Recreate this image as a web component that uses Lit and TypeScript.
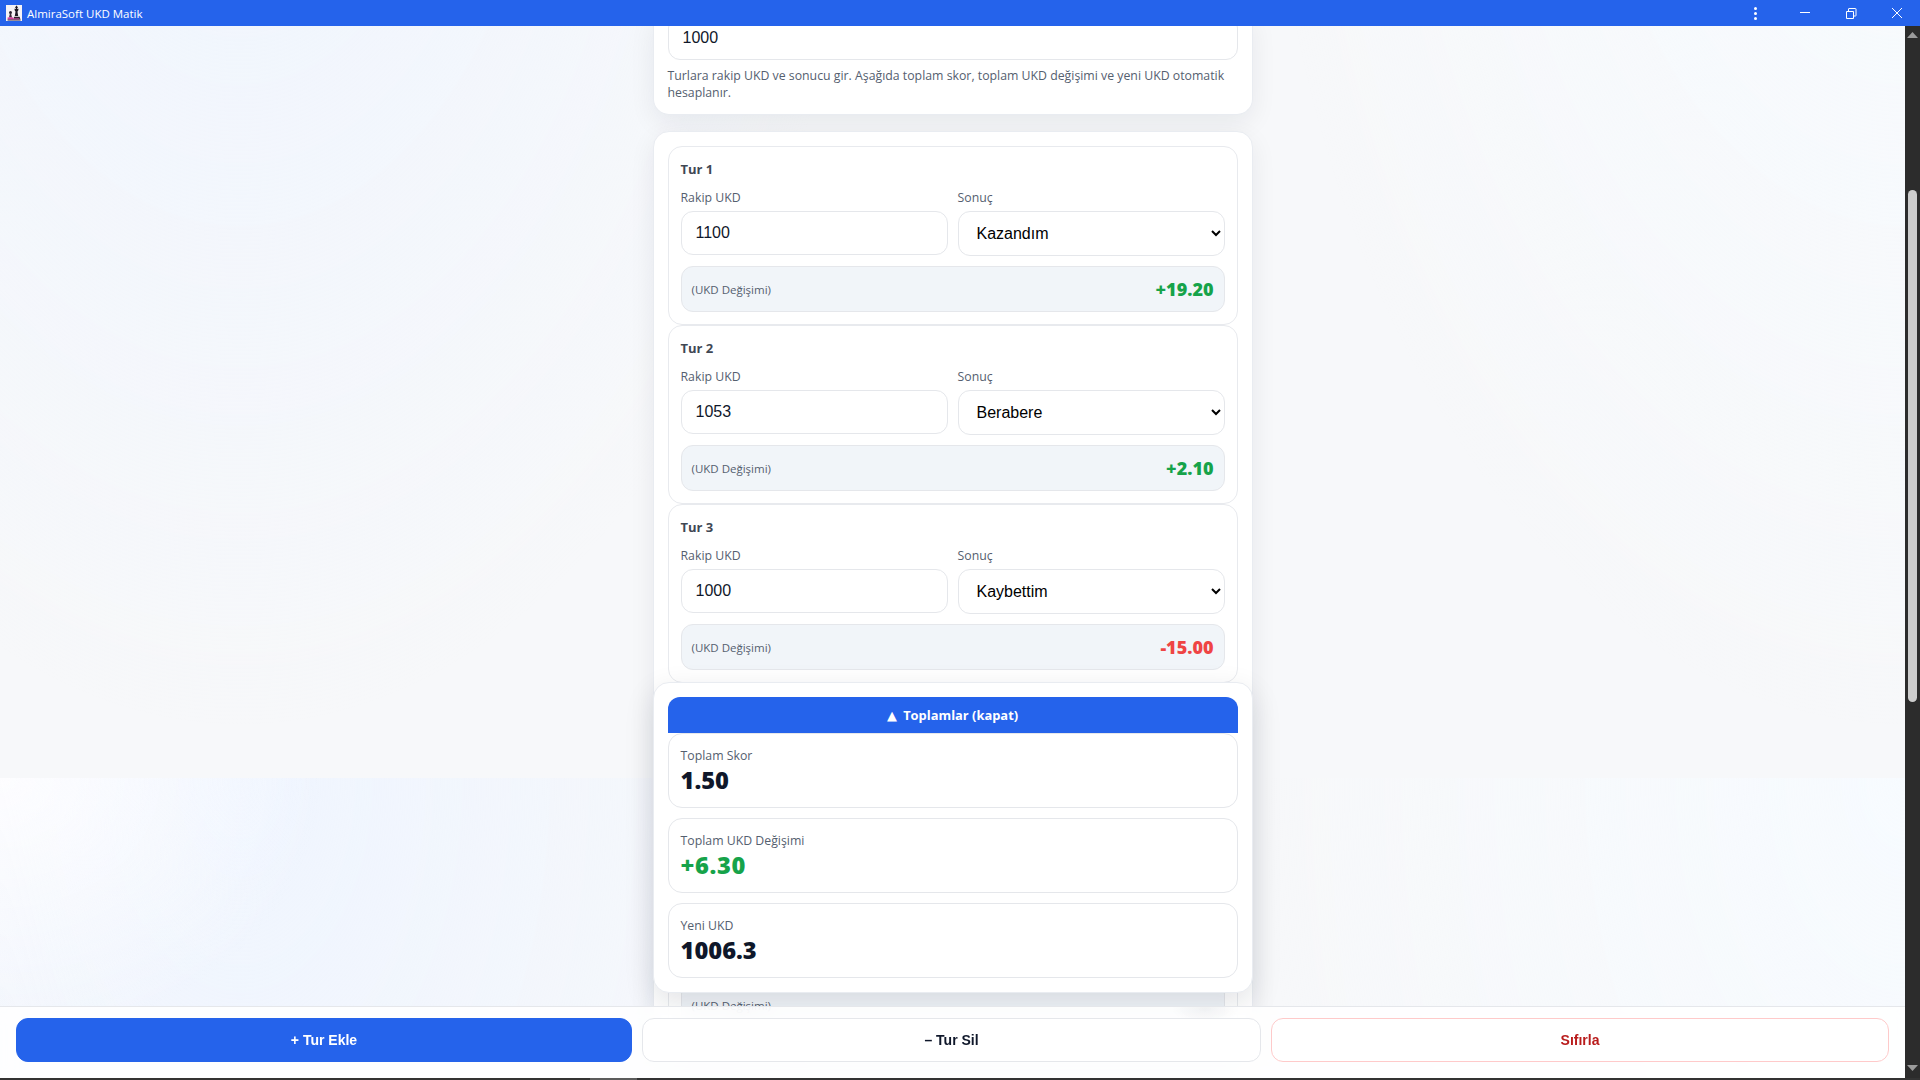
import { LitElement, html, css, svg } from 'lit';
import { customElement, state } from 'lit/decorators.js';

interface Round {
  rival: string;
  result: string;
  change: string;
  tone: 'up' | 'down' | 'flat';
}

const RESULTS = ['Kazandım', 'Berabere', 'Kaybettim'];

@customElement('app-root')
export class AppRoot extends LitElement {
  @state()
  rounds: Round[] = [
    { rival: '1100', result: 'Kazandım', change: '+19.20', tone: 'up' },
    { rival: '1053', result: 'Berabere', change: '+2.10', tone: 'up' },
    { rival: '1000', result: 'Kaybettim', change: '-15.00', tone: 'down' },
    { rival: '', result: 'Kazandım', change: '', tone: 'flat' },
    { rival: '', result: 'Kazandım', change: '', tone: 'flat' },
  ];

  static styles = css`
    :host {
      display: flex;
      flex-direction: column;
      width: 1920px;
      height: 1080px;
      overflow: hidden;
      background: #2b2b2b;
      font-family: 'Open Sans', 'Noto Sans', sans-serif;
      color: #0f172a;
    }

    .titlebar {
      flex: 0 0 26px;
      display: flex;
      align-items: center;
      background: #2563eb;
      color: #fff;
      font-size: 11.5px;
      padding-left: 6px;
    }
    .titlebar .logo {
      margin-right: 5px;
    }
    .titlebar .name {
      flex: 1;
    }
    .controls {
      display: block;
    }

    .window {
      flex: 0 0 1052px;
      display: flex;
      min-height: 0;
    }

    .content {
      position: relative;
      flex: 1;
      overflow: hidden;
      display: flex;
      justify-content: center;
      align-items: flex-start;
      background-color: #f7f8fa;
      background-image:
        radial-gradient(ellipse 320px 260px at 0 0, #fdfdff, rgba(253, 253, 255, 0)),
        radial-gradient(ellipse 620px 1000px at 240px 0, #eff5ff, rgba(239, 245, 255, 0)),
        radial-gradient(ellipse 640px 1000px at 100% 0, #f7fbff, rgba(247, 251, 255, 0));
      background-size: 100% 1052px;
      background-position: 0 -300px;
      background-repeat: repeat-y;
    }

    .page {
      position: relative;
      width: 600px;
      margin-top: -10px;
      display: flex;
      flex-direction: column;
      gap: 16px;
    }

    .card {
      background: #fff;
      border: 1px solid #e9ecf1;
      border-radius: 16px;
      padding: 14px;
      box-shadow: 0 8px 26px rgba(15, 23, 42, 0.07);
    }
    .card.intro {
      padding-top: 0;
      padding-bottom: 13px;
      border-top: 0;
      border-radius: 0 0 16px 16px;
    }

    input,
    select {
      box-sizing: border-box;
      display: block;
      width: 100%;
      height: 44px;
      border: 1px solid #e5e7eb;
      border-radius: 12px;
      background: #fff;
      font-family: 'Liberation Sans', Arial, sans-serif;
      font-size: 16px;
      color: #0f172a;
      padding: 0 14px;
      outline: none;
    }
    select {
      height: 45px;
      padding: 0 0 0 14px;
      color: #000;
    }

    .hint {
      margin: 7px 0 0;
      font-size: 12.3px;
      line-height: 17px;
      color: #55606f;
    }

    .round {
      box-sizing: border-box;
      height: 179px;
      border: 1px solid #e8eaee;
      border-radius: 14px;
      padding: 12px;
      background: #fff;
    }
    .round h3 {
      margin: 0 0 10px;
      font-size: 13px;
      line-height: 20px;
      font-weight: 700;
      color: #3f4854;
    }
    .fields {
      display: grid;
      grid-template-columns: 1fr 1fr;
      gap: 10px;
    }
    label {
      display: block;
      font-size: 12.3px;
      line-height: 17px;
      margin-bottom: 5px;
      color: #55606f;
    }
    .change {
      box-sizing: border-box;
      height: 46px;
      margin-top: 10px;
      padding: 0 10px;
      display: flex;
      align-items: center;
      justify-content: space-between;
      background: #f1f5f9;
      border: 1px solid #e5e7eb;
      border-radius: 12px;
      font-size: 11.5px;
      color: #55606f;
    }
    .change b {
      font-size: 18px;
      font-weight: 800;
    }
    .up {
      color: #16a34a;
    }
    .down {
      color: #ef4444;
    }

    .totals {
      position: absolute;
      left: 0;
      right: 0;
      top: 666px;
      box-sizing: border-box;
      background: #fff;
      border: 1px solid #e9ecf1;
      border-radius: 16px;
      padding: 14px;
      box-shadow: 0 10px 30px rgba(15, 23, 42, 0.12);
      display: flex;
      flex-direction: column;
      gap: 10px;
    }
    .totals button {
      display: block;
      width: 100%;
      height: 36px;
      margin-bottom: -10px;
      border: 0;
      border-radius: 12px 12px 0 0;
      background: #2563eb;
      color: #fff;
      font-family: inherit;
      font-size: 12.9px;
      font-weight: 700;
    }
    .totals button i {
      font-family: 'DejaVu Sans', sans-serif;
      font-style: normal;
      margin-right: 3px;
    }
    .stat {
      box-sizing: border-box;
      height: 75px;
      border: 1px solid #e5e7eb;
      border-radius: 14px;
      padding: 12px 12px 0;
      background: #fff;
    }
    .stat span {
      display: block;
      font-size: 12.3px;
      line-height: 20px;
      color: #55606f;
    }
    .stat strong {
      display: block;
      font-size: 23.7px;
      line-height: 29px;
      font-weight: 800;
    }
    .stat strong.up {
      word-spacing: 0;
      letter-spacing: 0.6px;
    }

    .footer {
      position: absolute;
      left: 0;
      right: 0;
      bottom: 0;
      box-sizing: border-box;
      height: 72px;
      padding: 11px 16px 16px;
      display: grid;
      grid-template-columns: 616px 619px 1fr;
      gap: 10px;
      border-top: 1px solid #e5e7eb;
      background-color: rgba(255, 255, 255, 0.86);
      background-image: radial-gradient(ellipse 34px 14px at 1205px 2px, rgba(15, 23, 42, 0.05), rgba(15, 23, 42, 0));
      backdrop-filter: blur(8px);
    }
    .footer button {
      height: 44px;
      border-radius: 12px;
      border: 1px solid #e5e7eb;
      background: #fff;
      font-family: 'Liberation Sans', Arial, sans-serif;
      font-size: 14px;
      font-weight: 700;
      color: #0f172a;
    }
    .footer .primary {
      background: #2563eb;
      border-color: #2563eb;
      color: #fff;
    }
    .footer .danger {
      border-color: #fecaca;
      color: #b91c1c;
    }

    .scrollbar {
      position: relative;
      flex: 0 0 15px;
      background: #2c2c2c;
    }
    .scrollbar .thumb {
      position: absolute;
      left: 3px;
      width: 9px;
      top: 164px;
      height: 512px;
      border-radius: 5px;
      background: #cdcdcd;
    }
    .scrollbar svg {
      position: absolute;
      left: 2px;
    }
    .scrollbar .arrow-up {
      top: 6px;
    }
    .scrollbar .arrow-down {
      bottom: 7px;
    }

    .strip {
      flex: 0 0 2px;
      position: relative;
      background: #333;
    }
    .strip i {
      position: absolute;
      left: 590px;
      width: 47px;
      top: 0;
      height: 2px;
      background: #5c5c5c;
    }
  `;

  private logo() {
    return html`<svg class="logo" width="16" height="16" viewBox="0 0 16 16">
      <rect width="16" height="16" fill="#f6f3f6" />
      <path d="M10 .8h1v1h1v1h-1v1h1.6l-.6 2.4h-.6l.8 4.8h-3.4l.8-4.8h-.6L8.400 3.800H10v-1H9v-1h1z" fill="#1c1822" />
      <path d="M8.200 11.800h5.400l.8 2.400H7.400z" fill="#2a2028" />
      <circle cx="4.500" cy="7.600" r="1.500" fill="#2b2230" />
      <path d="M3.800 9h1.400l.8 3.400H3z" fill="#3a2536" />
      <path d="M1.600 12.400h5.800v2.200H1.600z" fill="#d63a9c" />
      <path d="M7.400 13.400h6v1.200h-6z" fill="#e24bb0" />
      <path d="M1.600 14.600h13v.8h-13z" fill="#3a2a3a" />
    </svg>`;
  }

  private controls() {
    return html`<svg class="controls" width="190" height="26" viewBox="0 0 190 26">
      ${svg`
        <circle cx="25.5" cy="8.500" r="1.500" fill="#fff" />
        <circle cx="25.5" cy="13.500" r="1.500" fill="#fff" />
        <circle cx="25.5" cy="18.500" r="1.500" fill="#fff" />
        <path d="M70 12.500h10" stroke="#fff" fill="none" />
        <path d="M116.500 11.500h7v7h-7z M118.500 11.500v-2.500a.5.5 0 0 1 .5-.5h6.500a.5.5 0 0 1 .5.5v6.500a.5.5 0 0 1-.5.5h-2" stroke="#fff" fill="none" />
        <path d="M162 8l10 10M172 8l-10 10" stroke="#fff" fill="none" />
      `}
    </svg>`;
  }

  private renderRound(r: Round, i: number) {
    return html`<div class="round">
      <h3>Tur ${i + 1}</h3>
      <div class="fields">
        <div>
          <label>Rakip UKD</label>
          <input .value=${r.rival} />
        </div>
        <div>
          <label>Sonuç</label>
          <select>
            ${RESULTS.map((o) => html`<option ?selected=${o === r.result}>${o}</option>`)}
          </select>
        </div>
      </div>
      <div class="change">
        <span>(UKD Değişimi)</span>
        <b class=${r.tone}>${r.change}</b>
      </div>
    </div>`;
  }

  render() {
    return html`
      <div class="titlebar">
        ${this.logo()}
        <span class="name">AlmiraSoft UKD Matik</span>
        ${this.controls()}
      </div>
      <div class="window">
        <div class="content">
          <div class="page">
            <section class="card intro">
              <input .value=${'1000'} />
              <p class="hint">
                Turlara rakip UKD ve sonucu gir. Aşağıda toplam skor, toplam UKD değişimi ve yeni UKD otomatik hesaplanır.
              </p>
            </section>
            <section class="card list">${this.rounds.map((r, i) => this.renderRound(r, i))}</section>
            <section class="totals">
              <button><i>▲</i> Toplamlar (kapat)</button>
              <div class="stat"><span>Toplam Skor</span><strong>1.50</strong></div>
              <div class="stat"><span>Toplam UKD Değişimi</span><strong class="up">+6.30</strong></div>
              <div class="stat"><span>Yeni UKD</span><strong>1006.3</strong></div>
            </section>
          </div>
          <div class="footer">
            <button class="primary">+ Tur Ekle</button>
            <button>– Tur Sil</button>
            <button class="danger">Sıfırla</button>
          </div>
        </div>
        <div class="scrollbar">
          <svg class="arrow-up" width="11" height="6" viewBox="0 0 11 6"><path d="M5.5 0L11 6H0z" fill="#9b9b9b" /></svg>
          <div class="thumb"></div>
          <svg class="arrow-down" width="11" height="6" viewBox="0 0 11 6"><path d="M0 0h11L5.5 6z" fill="#9b9b9b" /></svg>
        </div>
      </div>
      <div class="strip"><i></i></div>
    `;
  }
}
